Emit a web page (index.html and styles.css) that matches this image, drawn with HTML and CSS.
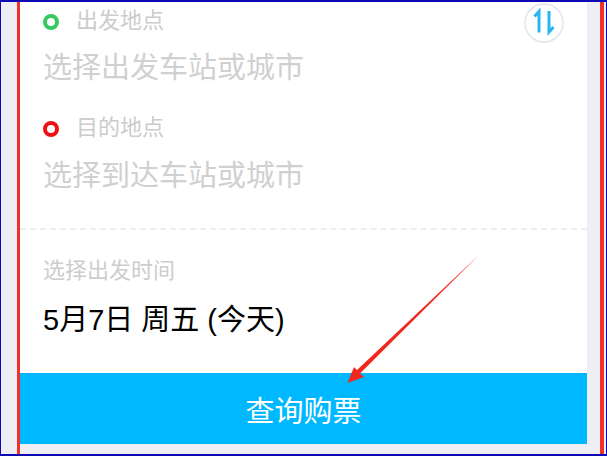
FILE: index.html
```html
<!DOCTYPE html>
<html lang="zh">
<head>
<meta charset="utf-8">
<title>查询购票</title>
<link rel="stylesheet" href="styles.css">
</head>
<body>
<div class="frame">
  <div class="marked">
    <main class="card">
      <section class="route">
        <div class="label-row first">
          <span class="dot dot-green"></span>
          <span class="label">出发地点</span>
        </div>
        <div class="place">选择出发车站或城市</div>
        <div class="label-row second">
          <span class="dot dot-red"></span>
          <span class="label">目的地点</span>
        </div>
        <div class="place place-to">选择到达车站或城市</div>
        <div class="swap">
          <svg viewBox="0 0 40 40" width="40" height="40">
            <circle cx="20" cy="20" r="19" fill="#fff" stroke="#dfe3e6" stroke-width="1.4"/>
            <path class="swap-arrow" d="M15 29.5V8.5L10.5 13.5M25 8V29L29.5 24"/>
          </svg>
        </div>
      </section>
      <section class="time">
        <div class="time-label">选择出发时间</div>
        <div class="date">5月7日 周五 (今天)</div>
      </section>
      <button class="search">查询购票</button>
    </main>
  </div>
</div>
<svg class="arrow" viewBox="0 0 607 456" width="607" height="456">
  <path d="M479.5 254.5L360 373.5L364 377L347.5 383L354 367L357 370Z" fill="#f0281e"/>
</svg>
</body>
</html>
```
FILE: styles.css
```css
* {
  box-sizing: border-box;
}

html,
body {
  margin: 0;
  height: 456px;
  overflow: hidden;
  background: #eeeef4;
  font-family: "Liberation Sans", "Noto Sans CJK SC", sans-serif;
}

.frame {
  height: 456px;
  border: solid #0a0ab4;
  border-width: 2px 1px;
  padding: 0 2px 0 16px;
}

.marked {
  height: 100%;
  border: solid #f2302a;
  border-width: 0 4px 0 3px;
}

.card {
  height: 442px;
  margin-right: 13px;
  background: #fff;
  display: flex;
  flex-direction: column;
}

.route {
  position: relative;
  height: 228px;
  padding-left: 23px;
  border-bottom: 2px dashed #eeeeee;
}

.label-row {
  display: flex;
  align-items: center;
  height: 24px;
}

.first {
  margin-top: 4px;
}

.second {
  margin-top: 25px;
}

.dot {
  width: 16px;
  height: 16px;
  margin-top: 7px;
  margin-right: 17px;
  border-radius: 50%;
  border: 4.5px solid;
}

.dot-green {
  border-color: #35c95f;
}

.dot-red {
  border-color: #ee1111;
}

.label {
  font-size: 22px;
  color: #cccccc;
}

.place {
  margin-top: 18px;
  font-size: 29px;
  line-height: 40px;
  color: #d0d0d0;
}

.place-to {
  margin-top: 19px;
}

.swap {
  position: absolute;
  right: 23px;
  top: 1px;
  line-height: 0;
}

.swap-arrow {
  fill: none;
  stroke: #29b6f0;
  stroke-width: 3;
}

.time {
  height: 143px;
  padding: 27px 0 0 23px;
}

.time-label {
  font-size: 22px;
  line-height: 28px;
  color: #cdcdcd;
}

.date {
  margin-top: 15px;
  font-size: 29px;
  line-height: 40px;
  color: #000;
}

.search {
  flex: none;
  display: block;
  width: 100%;
  height: 71px;
  padding: 0;
  border: 0;
  background: #00b8ff;
  color: #fff;
  font: inherit;
  font-size: 29px;
}

.arrow {
  position: absolute;
  left: 0;
  top: 0;
}
```
